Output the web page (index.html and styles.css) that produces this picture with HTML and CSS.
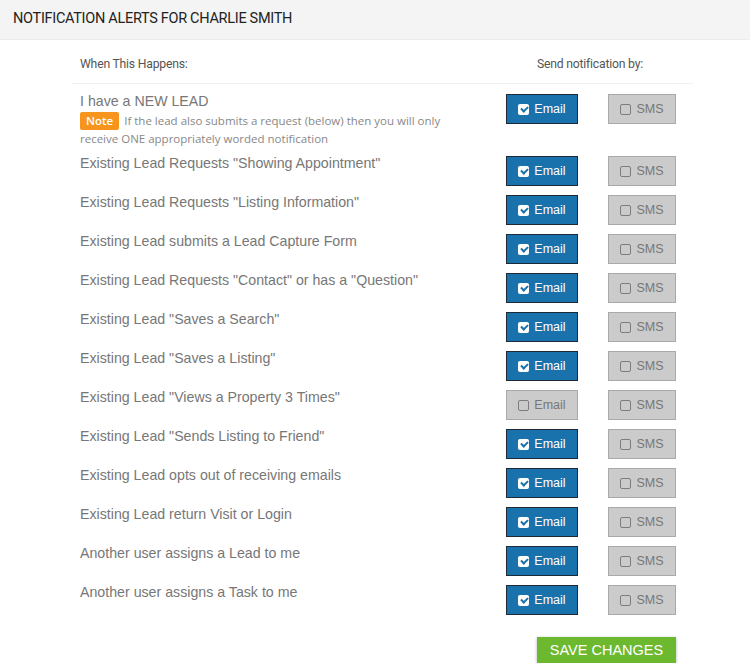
FILE: index.html
```html
<!DOCTYPE html>
<html lang="en">
<head>
  <meta charset="UTF-8">
  <title>Notification Alerts</title>
  <link rel="stylesheet" href="styles.css">
</head>
<body>
  <div class="page-title">NOTIFICATION ALERTS FOR CHARLIE SMITH</div>

  <div class="container">
    <div class="head-row">
      <div class="head-event">When This Happens:</div>
      <div class="head-send">Send notification by:</div>
    </div>

    <!-- First row has the note -->
    <div class="alert-row">
      <div class="event">
        <div class="event-title">I have a NEW LEAD</div>
        <div class="note"><span class="note-badge">Note</span> If the lead also submits a request (below) then you will only receive ONE appropriately worded notification</div>
      </div>
      <button class="opt opt-email on"><span class="box"></span>Email</button>
      <button class="opt opt-sms"><span class="box"></span>SMS</button>
    </div>

    <div class="alert-row">
      <div class="event"><div class="event-title">Existing Lead Requests "Showing Appointment"</div></div>
      <button class="opt opt-email on"><span class="box"></span>Email</button>
      <button class="opt opt-sms"><span class="box"></span>SMS</button>
    </div>
    <div class="alert-row">
      <div class="event"><div class="event-title">Existing Lead Requests "Listing Information"</div></div>
      <button class="opt opt-email on"><span class="box"></span>Email</button>
      <button class="opt opt-sms"><span class="box"></span>SMS</button>
    </div>
    <div class="alert-row">
      <div class="event"><div class="event-title">Existing Lead submits a Lead Capture Form</div></div>
      <button class="opt opt-email on"><span class="box"></span>Email</button>
      <button class="opt opt-sms"><span class="box"></span>SMS</button>
    </div>
    <div class="alert-row">
      <div class="event"><div class="event-title">Existing Lead Requests "Contact" or has a "Question"</div></div>
      <button class="opt opt-email on"><span class="box"></span>Email</button>
      <button class="opt opt-sms"><span class="box"></span>SMS</button>
    </div>
    <div class="alert-row">
      <div class="event"><div class="event-title">Existing Lead "Saves a Search"</div></div>
      <button class="opt opt-email on"><span class="box"></span>Email</button>
      <button class="opt opt-sms"><span class="box"></span>SMS</button>
    </div>
    <div class="alert-row">
      <div class="event"><div class="event-title">Existing Lead "Saves a Listing"</div></div>
      <button class="opt opt-email on"><span class="box"></span>Email</button>
      <button class="opt opt-sms"><span class="box"></span>SMS</button>
    </div>
    <div class="alert-row">
      <div class="event"><div class="event-title">Existing Lead "Views a Property 3 Times"</div></div>
      <button class="opt opt-email"><span class="box"></span>Email</button>
      <button class="opt opt-sms"><span class="box"></span>SMS</button>
    </div>
    <div class="alert-row">
      <div class="event"><div class="event-title">Existing Lead "Sends Listing to Friend"</div></div>
      <button class="opt opt-email on"><span class="box"></span>Email</button>
      <button class="opt opt-sms"><span class="box"></span>SMS</button>
    </div>
    <div class="alert-row">
      <div class="event"><div class="event-title">Existing Lead opts out of receiving emails</div></div>
      <button class="opt opt-email on"><span class="box"></span>Email</button>
      <button class="opt opt-sms"><span class="box"></span>SMS</button>
    </div>
    <div class="alert-row">
      <div class="event"><div class="event-title">Existing Lead return Visit or Login</div></div>
      <button class="opt opt-email on"><span class="box"></span>Email</button>
      <button class="opt opt-sms"><span class="box"></span>SMS</button>
    </div>
    <div class="alert-row">
      <div class="event"><div class="event-title">Another user assigns a Lead to me</div></div>
      <button class="opt opt-email on"><span class="box"></span>Email</button>
      <button class="opt opt-sms"><span class="box"></span>SMS</button>
    </div>
    <div class="alert-row">
      <div class="event"><div class="event-title">Another user assigns a Task to me</div></div>
      <button class="opt opt-email on"><span class="box"></span>Email</button>
      <button class="opt opt-sms"><span class="box"></span>SMS</button>
    </div>

    <div class="actions">
      <button class="save-btn">SAVE CHANGES</button>
    </div>
  </div>
</body>
</html>
```

FILE: styles.css
```css
body {
  margin: 0;
  background: #fff;
  font-family: Arial, "Liberation Sans", sans-serif;
}
.page-title {
  height: 39px;
  line-height: 38px;
  padding-left: 13px;
  background: #f4f4f4;
  border-bottom: 1px solid #ececec;
  font-family: Roboto, sans-serif;
  font-size: 14.5px;
  color: #222;
  letter-spacing: -0.3px;
}
.container {
  width: 621px;
  margin-left: 72px;
}
.head-row {
  display: flex;
  justify-content: space-between;
  height: 43px;
  line-height: 48px;
  padding: 0 50px 0 8px;
  border-bottom: 1px solid #f0f0f0;
  font-family: Roboto, sans-serif;
  font-size: 12.2px;
  color: #555;
  letter-spacing: -0.2px;
}
.head-row + .alert-row {
  margin-top: 10px;
}
.alert-row {
  display: flex;
  align-items: flex-start;
  padding-left: 8px;
  margin-bottom: 9px;
}
.event {
  flex: 1;
  padding-right: 40px;
}
.event-title {
  font-size: 14.2px;
  color: #777;
  line-height: 15px;
}
.note {
  margin-top: 3px;
  font-family: "Open Sans", sans-serif;
  font-size: 11.5px;
  line-height: 17px;
  color: #888;
}
.note-badge {
  display: inline-block;
  vertical-align: top;
  height: 18px;
  line-height: 18px;
  background: #f7941d;
  color: #fff;
  font-weight: 600;
  padding: 0 6px;
  margin-right: 2px;
  border-radius: 2px;
}
.opt {
  display: flex;
  align-items: center;
  justify-content: center;
  height: 30px;
  padding: 0;
  background: #cbcbcb;
  border: 1px solid #a9a9a9;
  color: #777;
  font-family: Arial, "Liberation Sans", sans-serif;
  font-size: 12.5px;
  cursor: pointer;
}
.opt-email {
  width: 72px;
  margin-right: 30px;
}
.opt-sms {
  width: 68px;
  margin-right: 17px;
}
.opt .box {
  width: 9px;
  height: 9px;
  margin-right: 5px;
  border: 1px solid #7d7d7d;
  border-radius: 2px;
  position: relative;
}
.opt.on {
  background: #1a72ac;
  border: 1px solid #1c2a36;
  color: #fff;
}
.opt.on .box {
  width: 11px;
  height: 11px;
  background: #fff;
  border: none;
}
.opt.on .box::after {
  content: "";
  position: absolute;
  left: 3px;
  top: 2px;
  width: 5px;
  height: 3px;
  border-left: 2px solid #1a72ac;
  border-bottom: 2px solid #1a72ac;
  transform: rotate(-45deg);
}
.actions {
  display: flex;
  justify-content: flex-end;
  padding-right: 17px;
  margin-top: 22px;
}
.save-btn {
  width: 139px;
  height: 26px;
  border: none;
  background: #6cb82f;
  color: #fff;
  font-family: Arial, "Liberation Sans", sans-serif;
  font-size: 14.5px;
  box-shadow: 0 1px 3px rgba(0, 0, 0, 0.3);
  cursor: pointer;
}
```
